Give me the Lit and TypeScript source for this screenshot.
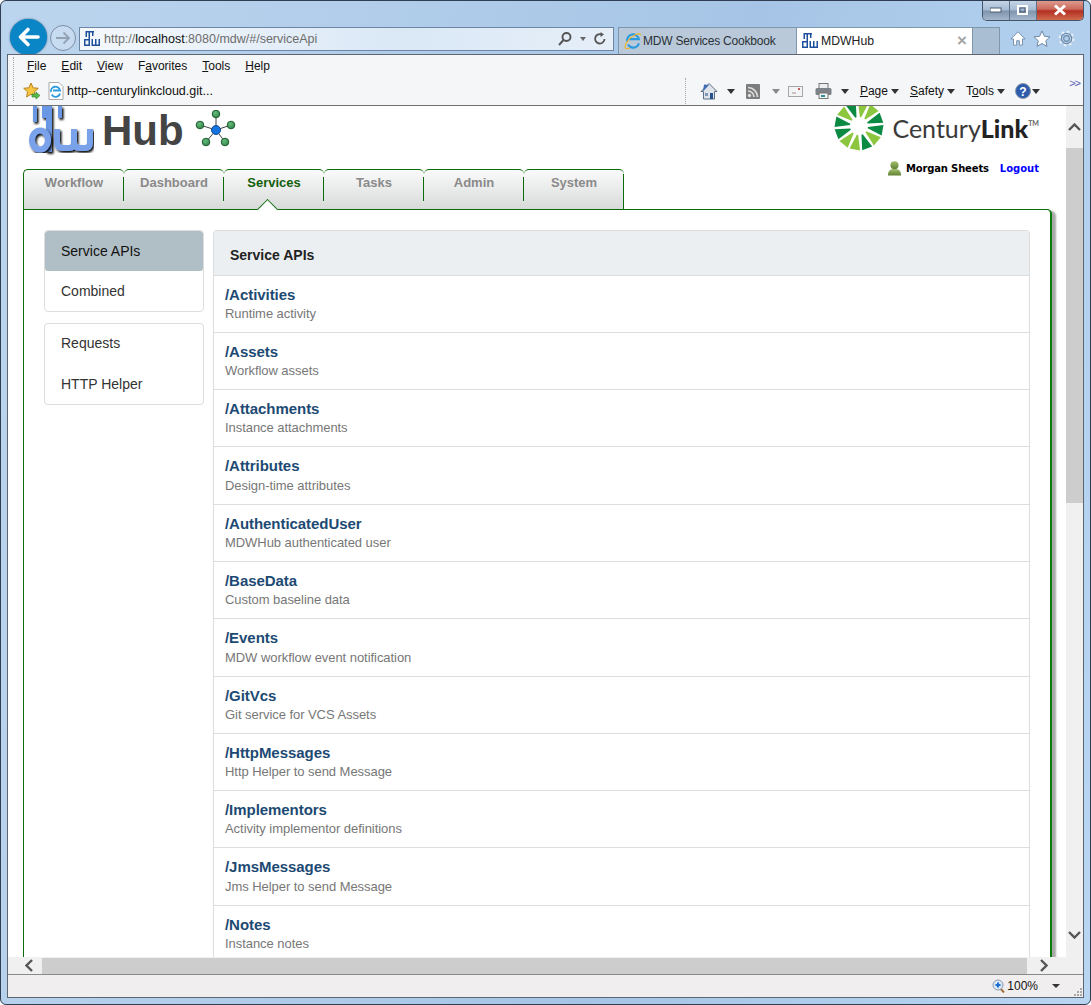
import { LitElement, html, css, svg } from 'lit';
import { customElement } from 'lit/decorators.js';

const services = [
  ['/Activities', 'Runtime activity'],
  ['/Assets', 'Workflow assets'],
  ['/Attachments', 'Instance attachments'],
  ['/Attributes', 'Design-time attributes'],
  ['/AuthenticatedUser', 'MDWHub authenticated user'],
  ['/BaseData', 'Custom baseline data'],
  ['/Events', 'MDW workflow event notification'],
  ['/GitVcs', 'Git service for VCS Assets'],
  ['/HttpMessages', 'Http Helper to send Message'],
  ['/Implementors', 'Activity implementor definitions'],
  ['/JmsMessages', 'Jms Helper to send Message'],
  ['/Notes', 'Instance notes'],
];

const tabs = ['Workflow', 'Dashboard', 'Services', 'Tasks', 'Admin', 'System'];

// small dw favicon
const dwIcon = html`<svg width="16" height="16" viewBox="0 0 16 16" fill="#1d4f9c">
  <path d="M1.500 0H10v1.500H1.500zM1.500 0h1.500v6H1.500zM4.500 0H6v15H4.500zM8 0h1.500v5H8z"/>
  <path d="M0 8h6v1.500H1.500v4H6V15H0zM7.500 8H9v5.500h2V8h1.500v5.500h2V8H16v7H7.500z"/>
</svg>`;

const ieIcon = (size: number) => html`<svg width=${size} height=${size} viewBox="0 0 20 20" fill="none">
  <path d="M3.500 10.500a6.500 6.500 0 0 1 13-2.500H5.500M16.500 12.500a6.500 6.500 0 0 1-12 1.500" stroke="#2b9be0" stroke-width="2.400"/>
  <path d="M1.500 18c-1.500-3 4-12 11-15 3-1.300 6-1.500 6 .5" stroke="#f0b429" stroke-width="1.300"/>
  <path d="M1.500 18c1 1 3 .5 5-.5" stroke="#f0b429" stroke-width="1.300"/>
</svg>`;

// the dark triangle next to toolbar commands
const caret = html`<i class="caret"></i>`;

const rayAngles = [340, 10, 40, 70, 100, 130, 160, 190, 220, 250, 280, 310];
const rayDark = [true, false, false, true, true, false, true, false, false, true, true, false];

const rays = () => rayAngles.map((deg, i) => {
  const a = deg * Math.PI / 180;
  const p = (r: number, d: number) => `${(25 + r * Math.sin(a + d)).toFixed(1)},${(25 - r * Math.cos(a + d)).toFixed(1)}`;
  return svg`<polygon points="${p(9, -0.07)} ${p(24.500, -0.22)} ${p(24.500, 0.22)} ${p(9, 0.07)}" fill=${rayDark[i] ? '#0b8a43' : '#8cc63f'} />`;
});

const hubNodes = [[21, 4], [5, 15], [36, 15], [11, 32], [30, 32]];

@customElement('ie-chrome-top')
export class IeChromeTop extends LitElement {
  static styles = css`
    :host {
      display: block;
      height: 53px;
      font-family: "Liberation Sans", Arial, sans-serif;
      position: relative;
    }
    .row {
      display: flex;
      align-items: flex-start;
      padding: 18px 0 0 3px;
      height: 53px;
      box-sizing: border-box;
    }
    .back {
      width: 37px;
      height: 36px;
      border-radius: 50%;
      background: #0a86c6;
      display: flex;
      align-items: center;
      justify-content: center;
      flex: none;
      box-shadow: 0 0 2px #24507a;
      margin-right: 3px;
    }
    .forward {
      width: 26px;
      height: 26px;
      margin-top: 6px;
      border: 1px solid #7d8ea5;
      border-radius: 50%;
      display: flex;
      align-items: center;
      justify-content: center;
      flex: none;
      margin-right: 3px;
      box-sizing: border-box;
      background: rgba(255, 255, 255, .2);
    }
    .address {
      width: 535px;
      height: 24px;
      margin-top: 8px;
      margin-right: 4px;
      flex: none;
      box-sizing: border-box;
      border: 1px solid #6e86a3;
      background: linear-gradient(90deg, rgba(255,255,255,.85), rgba(232,241,250,.75) 60%, rgba(255,255,255,.7));
      display: flex;
      align-items: center;
      padding: 0 6px 0 4px;
      font-size: 12.500px;
      color: #6d6d6d;
    }
    .address b { font-weight: 400; color: #111; }
    .address svg:first-child { margin-right: 4px; }
    .addr-url { flex: 1; }
    .addr-tools { display: flex; align-items: center; gap: 3px; }
    .addr-caret {
      border: 3px solid transparent;
      border-top: 4px solid #666;
      border-bottom: 0;
      margin-right: 4px;
    }
    .tab {
      height: 27px;
      margin-top: 8px;
      box-sizing: border-box;
      flex: none;
      border: 1px solid #7f96af;
      border-bottom: 0;
      display: flex;
      align-items: center;
      font-size: 12px;
      white-space: nowrap;
    }
    .tab.off {
      width: 178px;
      background: #b9c9d9;
      color: #2b3138;
      padding-left: 5px;
      gap: 1px;
      border-right: 0;
      letter-spacing: -.2px;
    }
    .tab.on {
      width: 177px;
      background: #fff;
      color: #222;
      padding-left: 5px;
      gap: 3px;
      font-size: 12.250px;
    }
    .tab .x { margin-left: auto; margin-right: 5px; color: #a4a4a4; font-size: 17px; font-weight: 700; }
    .tab.blank {
      width: 27px;
      background: #a9bdd3;
      border-left: 0;
    }
    .tools { display: flex; gap: 7px; margin: 11px 0 0 10px; }
    .caption {
      position: absolute;
      top: -1px;
      right: 0;
      display: flex;
      height: 20px;
      border: 1px solid #46566a;
      border-top: 0;
      border-radius: 0 0 5px 5px;
      overflow: hidden;
    }
    .caption span {
      display: flex;
      align-items: center;
      justify-content: center;
      height: 20px;
      box-sizing: border-box;
      border-right: 1px solid #5f7186;
    }
    .caption .min, .caption .max {
      width: 27px;
      background: linear-gradient(#c8d8ea 0, #a5bad2 50%, #7f94ad 55%, #a3b6cc);
    }
    .caption .close {
      width: 46px;
      border: 0;
      background: linear-gradient(#dfa095 0, #cb6b5c 45%, #b43022 55%, #cf6a4e);
    }
  `;

  render() {
    return html`
      <div class="row">
        <div class="back">
          <svg width="24" height="24" viewBox="0 0 24 24" fill="none" stroke="#fff" stroke-width="3.600" stroke-linecap="round" stroke-linejoin="round"><path d="M21 12H4M11 4.500 3.500 12l7.500 7.500"/></svg>
        </div>
        <div class="forward">
          <svg width="18" height="18" viewBox="0 0 18 18" fill="none" stroke="#93a2b3" stroke-width="1.800"><path d="M2 9h12M9.500 3.500 15 9l-5.500 5.500"/></svg>
        </div>
        <div class="address">
          ${dwIcon}
          <span class="addr-url">http://<b>localhost</b>:8080/mdw/#/serviceApi</span>
          <span class="addr-tools">
            <svg width="16" height="16" viewBox="0 0 16 16" fill="none" stroke="#555" stroke-width="1.900"><circle cx="9.500" cy="6" r="4"/><path d="M6.500 9 2 14"/></svg>
            <i class="addr-caret"></i>
            <svg width="14" height="14" viewBox="0 0 14 14" fill="none" stroke="#555" stroke-width="1.800"><path d="M11.500 7A4.700 4.700 0 1 1 8 2.300"/><path d="M7.500 0v5l3.500-2.500z" fill="#555" stroke="none"/></svg>
          </span>
        </div>
        <div class="tab off">${ieIcon(18)}<span>MDW Services Cookbook</span></div>
        <div class="tab on">${dwIcon}<span>MDWHub</span><span class="x">×</span></div>
        <div class="tab blank"></div>
        <div class="tools">
          <svg width="16" height="17" viewBox="0 0 18 17" fill="#fff" stroke="#6d87a3"><path d="M9 1 1 9h3v7h3.500v-5h3v5H14V9h3z"/></svg>
          <svg width="18" height="17" viewBox="0 0 18 17" fill="#fff" stroke="#6d87a3"><path d="m9 1 2.400 5.300 5.600.6-4.200 3.800 1.200 5.700L9 13.500l-5 2.900 1.200-5.700L1 6.900l5.600-.6z"/></svg>
          <svg width="17" height="17" viewBox="0 0 18 17" fill="none" stroke="#6d87a3" stroke-width="1.200"><circle cx="9" cy="8.500" r="3"/><circle cx="9" cy="8.500" r="7" stroke-width="2.600" stroke-dasharray="2.800 2.700" stroke="#e8f0f8"/><circle cx="9" cy="8.500" r="5.500"/></svg>
        </div>
      </div>
      <div class="caption">
        <span class="min"><svg width="12" height="6" viewBox="0 0 12 6"><rect y="1" width="11" height="4" fill="#fff" stroke="#4d5d70"/></svg></span>
        <span class="max"><svg width="12" height="10" viewBox="0 0 12 10"><rect x="1" y="1" width="9" height="8" fill="none" stroke="#fff" stroke-width="2"/><rect x="3" y="3" width="5" height="4" fill="none" stroke="#4d5d70"/></svg></span>
        <span class="close"><svg width="16" height="12" viewBox="0 0 16 12" fill="none"><path d="M3 1.500 13 10.500M13 1.500 3 10.500" stroke="#fff" stroke-width="3"/></svg></span>
      </div>
    `;
  }
}

@customElement('ie-toolbars')
export class IeToolbars extends LitElement {
  static styles = css`
    :host {
      display: block;
      height: 51px;
      box-sizing: border-box;
      background: #f5f6f7;
      border-bottom: 1px solid #6f6f6f;
      font-family: "Liberation Sans", Arial, sans-serif;
      font-size: 12px;
      color: #111;
      position: relative;
    }
    .menu {
      display: flex;
      height: 22px;
      align-items: center;
      padding-left: 19px;
      gap: 15px;
      position: relative;
    }
    .menu::before, .cmds::before {
      content: "";
      width: 0;
      border-left: 1px dotted #a8a8a8;
    }
    .menu::before { position: absolute; left: 5px; top: 2px; height: 44px; }
    u { text-underline-offset: 1px; }
    .lower {
      display: flex;
      height: 28px;
      align-items: center;
      padding-left: 15px;
    }
    .link { display: flex; align-items: center; gap: 3px; margin-left: 7px; font-size: 12.500px; }
    .cmds {
      display: flex;
      align-items: center;
      margin-left: auto;
      margin-right: 43px;
      height: 26px;
    }
    .cmds::before { height: 26px; margin-right: 14px; }
    .cmd { display: flex; align-items: center; gap: 3px; margin-right: 11px; }
    .cmd.home { gap: 9px; }
    .cmd.feed { gap: 12px; margin-right: 8px; }
    .cmd.mail { margin-right: 12px; }
    .cmd.print { gap: 9px; margin-right: 11px; }
    .cmd.tools { margin-right: 10px; }
    .cmd.help { gap: 1px; margin-right: 0; }
    .caret {
      display: inline-block;
      border: 4px solid transparent;
      border-top: 5px solid #333;
      border-bottom: 0;
    }
    .caret.dim { border-top-color: #888; }
    .more {
      position: absolute;
      right: 3px;
      top: 22px;
      color: #5c61b8;
      font-size: 11px;
      letter-spacing: -1px;
    }
  `;

  render() {
    return html`
      <div class="menu">
        <span><u>F</u>ile</span><span><u>E</u>dit</span><span><u>V</u>iew</span><span>F<u>a</u>vorites</span><span><u>T</u>ools</span><span><u>H</u>elp</span>
      </div>
      <div class="lower">
        <svg width="18" height="18" viewBox="0 0 18 18"><path d="m8 1 2.100 4.800 5.200.5-3.900 3.500 1.100 5.100L8 12.300l-4.500 2.600 1.100-5.100L.7 6.300l5.200-.5z" fill="#f6c542" stroke="#b8811c"/><path d="M9 12h4v-2l4 3.500-4 3.500v-2H9z" fill="#59b84a" stroke="#2c7f28" stroke-width=".6"/></svg>
        <span class="link">
          <svg width="16" height="18" viewBox="0 0 16 18"><path d="M1 .5h10l4 4v13H1z" fill="#fff" stroke="#a9a9a9"/><path d="M3 10a4.500 4.500 0 0 1 9-1.500H5M12 11.500a4.500 4.500 0 0 1-8.300 1" fill="none" stroke="#2b9be0" stroke-width="1.800"/></svg>
          http--centurylinkcloud.git...
        </span>
        <div class="cmds">
          <span class="cmd home">
            <svg width="18" height="18" viewBox="0 0 18 18"><path d="M9 1.500 1 9.500h2.500V17h11V9.500H17z" fill="#dfe4ea" stroke="#5d6e85"/><path d="M3 9.500 9 3l-5-.500z" fill="#3f6cb0"/><rect x="10" y="11" width="3" height="6" fill="#27508e"/><rect x="5" y="11" width="3" height="3" fill="#7f98b8"/></svg>
            ${caret}
          </span>
          <span class="cmd feed">
            <svg width="14" height="15" viewBox="0 0 14 15"><rect width="14" height="15" rx="1" fill="#7d7d7d"/><circle cx="3.500" cy="11.500" r="1.700" fill="#ddd"/><path d="M2 7a6 6 0 0 1 6 6M2 3.500A9.500 9.500 0 0 1 11.500 13" fill="none" stroke="#ddd" stroke-width="1.700"/></svg>
            <i class="caret dim"></i>
          </span>
          <span class="cmd mail">
            <svg width="15" height="11" viewBox="0 0 15 11"><rect x=".5" y=".5" width="14" height="10" fill="#f3f3f3" stroke="#a6a6a6"/><path d="M4 7h4" stroke="#999"/><rect x="10" y="2" width="2" height="2" fill="#c46060"/></svg>
          </span>
          <span class="cmd print">
            <svg width="17" height="16" viewBox="0 0 17 16"><rect x="4" y=".5" width="9" height="5" fill="#eee" stroke="#777"/><rect x=".5" y="5" width="16" height="7" rx="1.500" fill="#7c8288"/><rect x="4" y="10" width="9" height="5.500" fill="#f4f4f4" stroke="#777"/><rect x="6" y="12" width="4" height="2" fill="#2a8f9a"/></svg>
            ${caret}
          </span>
          <span class="cmd"><span><u>P</u>age</span>${caret}</span>
          <span class="cmd"><span><u>S</u>afety</span>${caret}</span>
          <span class="cmd tools"><span>T<u>o</u>ols</span>${caret}</span>
          <span class="cmd help">
            <svg width="16" height="16" viewBox="0 0 16 16"><circle cx="8" cy="8" r="7.500" fill="#2d5cad" stroke="#8d99ad"/><text x="8" y="12.500" text-anchor="middle" font-size="12" font-weight="700" fill="#fff" font-family="Liberation Sans">?</text></svg>
            ${caret}
          </span>
        </div>
      </div>
      <span class="more">&gt;&gt;</span>
    `;
  }
}

@customElement('mdw-page')
export class MdwPage extends LitElement {
  static styles = css`
    :host {
      display: block;
      height: 851px;
      overflow: hidden;
      background: #fff;
      font-family: "Liberation Sans", Arial, sans-serif;
    }
    .head {
      display: flex;
      height: 63px;
      justify-content: space-between;
      padding: 0 27px 0 20px;
    }
    .brand { display: flex; align-items: flex-start; }
    .brand .hub {
      font-size: 42px;
      line-height: 48px;
      font-weight: 700;
      color: #444;
      margin: 1px 11px 0 8px;
    }
    .nodes { margin-top: 4px; }
    .right { display: flex; flex-direction: column; align-items: flex-end; }
    .century { display: flex; align-items: flex-start; margin-top: -5px; height: 45px; }
    .century .word {
      font-family: Lato, "Liberation Sans", sans-serif;
      font-size: 25px;
      line-height: 30px;
      color: #3a3a3a;
      margin: 12px 0 0 8px;
    }
    .century b { color: #222; font-weight: 900; }
    .century sup { font-size: 7px; font-weight: 700; vertical-align: 12px; line-height: 0; color: #666; }
    .user {
      display: flex;
      align-items: center;
      font-family: "DejaVu Sans", sans-serif;
      font-size: 10px;
      font-weight: 700;
      letter-spacing: -.15px;
      gap: 4px;
      margin-top: 14px;
      height: 17px;
      color: #000;
    }
    .user a { color: #00f; margin-left: 7px; letter-spacing: 0; }
    .tabs { display: flex; height: 40px; margin-left: 15px; }
    .tabs .t {
      width: 100px;
      box-sizing: border-box;
      border-top: 1px solid #0d6b0d;
      border-radius: 5px 5px 0 0;
      background: linear-gradient(#fafafa, #d8dada);
      text-align: center;
      font-size: 13px;
      font-weight: 700;
      color: #8a8a8a;
      line-height: 25px;
      position: relative;
    }
    .tabs .t::before {
      content: "";
      position: absolute;
      right: 0;
      top: 7px;
      height: 24px;
      border-right: 1px solid #0d6b0d;
    }
    .tabs .t:first-child { border-left: 1px solid #0d6b0d; width: 101px; }
    .tabs .t:last-child::before { top: 4px; height: 36px; }
    .tabs .t.on { color: #14600f; }
    .tabs .t.on::after {
      content: "";
      position: absolute;
      left: 36px;
      bottom: -8px;
      width: 15px;
      height: 15px;
      background: #fff;
      border-left: 1px solid #0d6b0d;
      border-top: 1px solid #0d6b0d;
      box-sizing: border-box;
      transform: rotate(45deg);
      z-index: 1;
    }
    .panel {
      margin-left: 15px;
      width: 1029px;
      box-sizing: border-box;
      background: #fff;
      border: 1px solid #0d6b0d;
      border-right: 2px solid #0b7a0b;
      border-radius: 0 5px 0 0;
      box-shadow: 4px 2px 2px #a9a9a9;
      padding: 20px 20px 0 20px;
      display: grid;
      grid-template-columns: 160px 817px;
      column-gap: 9px;
      align-items: start;
      height: 760px;
    }
    .side { display: flex; flex-direction: column; gap: 11px; }
    .group {
      border: 1px solid #ddd;
      border-radius: 4px;
      overflow: hidden;
      font-size: 14px;
      color: #333;
    }
    .group div { height: 40px; padding-left: 16px; line-height: 39px; }
    .group div:nth-child(2) { line-height: 41px; }
    .group div.on { line-height: 40px; background: #b0bec5; color: #111; border-radius: 3px; }
    .list { border: 1px solid #ddd; border-bottom: 0; border-radius: 4px 4px 0 0; }
    .list .hd {
      height: 44.500px;
      box-sizing: border-box;
      background: #eceff1;
      border-bottom: 1px solid #ddd;
      padding: 16px 0 0 16px;
      font-size: 14px;
      line-height: 16px;
      font-weight: 700;
      color: #222;
    }
    .item {
      height: 57.300px;
      box-sizing: border-box;
      border-bottom: 1px solid #ddd;
      padding: 8px 11px 0;
    }
    .item h4 {
      margin: 0;
      font-size: 15px;
      line-height: 21.300px;
      font-weight: 700;
      letter-spacing: -.05px;
      color: #1d4a73;
    }
    .item p {
      margin: 0;
      font-size: 13px;
      line-height: 18px;
      letter-spacing: -.05px;
      color: #777;
    }
  `;

  render() {
    return html`
      <div class="head">
        <div class="brand">
          <svg width="66" height="50" viewBox="0 0 66 50">
            <defs>
              <filter id="ds" x="-10%" y="-10%" width="125%" height="125%"><feDropShadow dx="1.500" dy="1.800" stdDeviation=".9" flood-color="#000"/></filter>
            </defs>
            <g filter="url(#ds)" fill="#6a97e4">
              <path d="M5 0h4v16H5zM14 0h4v12h-4zM18 0h6v46h-6zM30 0h4v12h-4z"/>
            </g>
            <g filter="url(#ds)" fill="none" stroke="#7aa2ea" stroke-width="6">
              <ellipse cx="12" cy="34" rx="8" ry="9.500"/>
              <path d="M29 23v13q0 6 6 6h6q5 0 5-6V23M46 36q0 6 6 6h5q5 0 5-6V23"/>
            </g>
          </svg>
          <span class="hub">Hub</span>
          <svg class="nodes" width="44" height="40" viewBox="0 0 44 40">
            <defs><radialGradient id="nd" cx=".4" cy=".35" r=".7"><stop offset="0" stop-color="#66bd7c"/><stop offset="1" stop-color="#2f8246"/></radialGradient></defs>
            ${hubNodes.map(n => svg`<line x1="21" y1="20" x2=${n[0]} y2=${n[1]} stroke="#444" stroke-width="1"/>`)}
            ${hubNodes.map(n => svg`<circle cx=${n[0]} cy=${n[1]} r="3.800" fill="url(#nd)" stroke="#1f5d33"/>`)}
            <circle cx="21" cy="20" r="4.500" fill="#1474e0" stroke="#134b91"/>
          </svg>
        </div>
        <div class="right">
          <div class="century">
            <svg width="50" height="50" viewBox="0 0 50 50">${rays()}</svg>
            <span class="word">Century<b>Link</b><sup>TM</sup></span>
          </div>
          <div class="user">
            <svg width="15" height="17" viewBox="0 0 16 17">
              <defs><linearGradient id="us" x1="0" y1="0" x2="0" y2="1"><stop offset="0" stop-color="#a3bf6c"/><stop offset="1" stop-color="#5f8232"/></linearGradient></defs>
              <circle cx="8" cy="5" r="4.300" fill="url(#us)"/><path d="M1 16c0-6 3-7 7-7s7 1 7 7z" fill="url(#us)"/>
            </svg>
            <span>Morgan Sheets</span>
            <a>Logout</a>
          </div>
        </div>
      </div>
      <div class="tabs">
        ${tabs.map(t => html`<div class="t ${t === 'Services' ? 'on' : ''}">${t}</div>`)}
      </div>
      <div class="panel">
        <div class="side">
          <div class="group"><div class="on">Service APIs</div><div>Combined</div></div>
          <div class="group"><div>Requests</div><div>HTTP Helper</div></div>
        </div>
        <div class="list">
          <div class="hd">Service APIs</div>
          ${services.map(s => html`<div class="item"><h4>${s[0]}</h4><p>${s[1]}</p></div>`)}
        </div>
      </div>
    `;
  }
}

@customElement('app-root')
export class AppRoot extends LitElement {
  static styles = css`
    :host {
      display: block;
      width: 1091px;
      height: 1005px;
      box-sizing: border-box;
      overflow: hidden;
      padding: 0 6px;
      background: linear-gradient(100deg, #bcd5ee, #a6c5e6 60%, #b8d6f2);
      border: 1px solid #2f3e52;
      border-radius: 6px;
      font-family: "Liberation Sans", Arial, sans-serif;
    }
    .frame {
      border: 1px solid #5d6670;
      display: flex;
      flex-direction: column;
      height: 944px;
      box-sizing: border-box;
      position: relative;
    }
    .view {
      display: grid;
      grid-template-columns: 1fr 17px;
      grid-template-rows: 851px 17px;
    }
    .sb { background: #f0f0f0; display: flex; align-items: center; }
    .sb.v { flex-direction: column; }
    .sb i { display: block; background: #cdcdcd; flex: none; }
    .sb .btn { display: flex; align-items: center; justify-content: center; flex: none; }
    .sb.v .up { width: 17px; height: 42px; }
    .sb.v i { width: 17px; height: 355px; }
    .sb.v .down { width: 17px; height: 44px; margin-top: auto; }
    .sb.h .left { width: 34px; height: 17px; padding-left: 8px; box-sizing: border-box; }
    .sb.h i { width: 985px; height: 16px; }
    .sb.h .right { width: 34px; height: 17px; }
    .h-wrap { grid-column: 1 / span 2; }
    .status {
      height: 23px;
      border-top: 1px solid #8a8a8a;
      background: #f0eeee;
      display: flex;
      align-items: center;
      justify-content: flex-end;
      font-size: 12px;
      color: #111;
      padding-right: 23px;
      gap: 2px;
      box-sizing: border-box;
      position: relative;
    }
    .status i {
      border: 4px solid transparent;
      border-top: 4px solid #333;
      border-bottom: 0;
      margin-left: 12px;
    }
    .grip { position: absolute; right: 1px; bottom: 1px; }
  `;

  render() {
    return html`
      <ie-chrome-top></ie-chrome-top>
      <div class="frame">
        <ie-toolbars></ie-toolbars>
        <div class="view">
          <mdw-page></mdw-page>
          <div class="sb v">
            <span class="btn up"><svg width="13" height="8" viewBox="0 0 13 8" fill="none" stroke="#555" stroke-width="2.400"><path d="M1 7l5.500-5.500L12 7"/></svg></span>
            <i></i>
            <span class="btn down"><svg width="13" height="8" viewBox="0 0 13 8" fill="none" stroke="#555" stroke-width="2.400"><path d="M1 1l5.500 5.500L12 1"/></svg></span>
          </div>
          <div class="sb h h-wrap">
            <span class="btn left"><svg width="8" height="13" viewBox="0 0 8 13" fill="none" stroke="#555" stroke-width="2.400"><path d="M7 1 1.500 6.500 7 12"/></svg></span>
            <i></i>
            <span class="btn right"><svg width="8" height="13" viewBox="0 0 8 13" fill="none" stroke="#555" stroke-width="2.400"><path d="m1 1 5.500 5.500L1 12"/></svg></span>
          </div>
        </div>
        <div class="status">
          <svg width="13" height="14" viewBox="0 0 13 14"><path d="m8 9 4 4.500" stroke="#a0703a" stroke-width="2"/><circle cx="6" cy="6" r="5" fill="#dbe9f6" stroke="#8a9bb0"/><path d="M3.500 6h5M6 3.500v5" stroke="#1c6ed0" stroke-width="2"/></svg>
          <span>100%</span><i></i>
          <svg class="grip" width="8" height="8" viewBox="0 0 8 8" fill="#a9a9a9"><path d="M6 0h2v2H6zM3 3h2v2H3zM6 3h2v2H6zM0 6h2v2H0zM3 6h2v2H3zM6 6h2v2H6z"/></svg>
        </div>
      </div>
    `;
  }
}
